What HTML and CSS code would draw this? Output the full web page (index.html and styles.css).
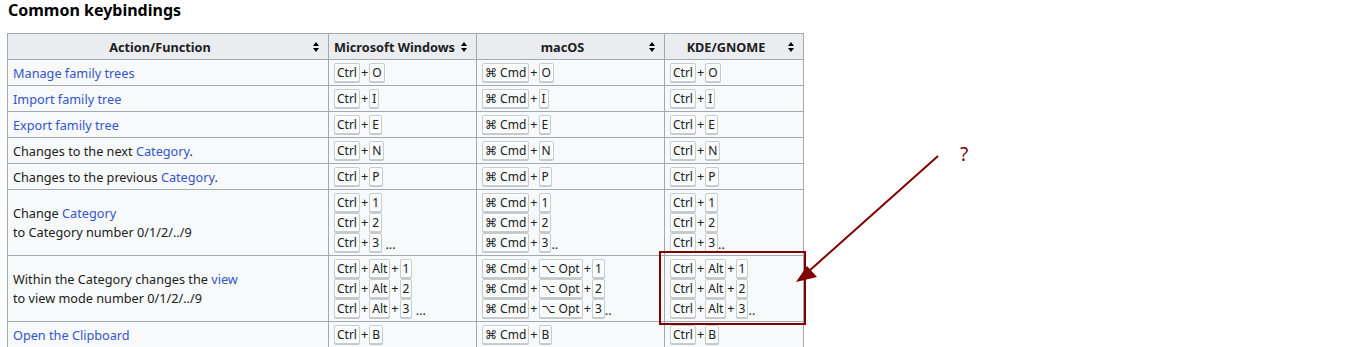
FILE: index.html
```html
<!DOCTYPE html>
<html>
<head>
<meta charset="utf-8">
<link rel="stylesheet" href="styles.css">
</head>
<body>
<div class="page">
  <h3 class="title">Common keybindings</h3>
  <table class="wikitable">
    <colgroup>
      <col class="c1"><col class="c2"><col class="c3"><col class="c4">
    </colgroup>
    <thead>
      <tr>
        <th>Action/Function<span class="sort"></span></th>
        <th>Microsoft Windows<span class="sort"></span></th>
        <th>macOS<span class="sort"></span></th>
        <th>KDE/GNOME<span class="sort"></span></th>
      </tr>
    </thead>
    <tbody>
      <tr>
        <td><a href="#">Manage family trees</a></td>
        <td><div class="kl"><kbd>Ctrl</kbd><span class="p">+</span><kbd>O</kbd></div></td>
        <td><div class="kl"><kbd>⌘ Cmd</kbd><span class="p">+</span><kbd>O</kbd></div></td>
        <td><div class="kl"><kbd>Ctrl</kbd><span class="p">+</span><kbd>O</kbd></div></td>
      </tr>
      <tr>
        <td><a href="#">Import family tree</a></td>
        <td><div class="kl"><kbd>Ctrl</kbd><span class="p">+</span><kbd>I</kbd></div></td>
        <td><div class="kl"><kbd>⌘ Cmd</kbd><span class="p">+</span><kbd>I</kbd></div></td>
        <td><div class="kl"><kbd>Ctrl</kbd><span class="p">+</span><kbd>I</kbd></div></td>
      </tr>
      <tr>
        <td><a href="#">Export family tree</a></td>
        <td><div class="kl"><kbd>Ctrl</kbd><span class="p">+</span><kbd>E</kbd></div></td>
        <td><div class="kl"><kbd>⌘ Cmd</kbd><span class="p">+</span><kbd>E</kbd></div></td>
        <td><div class="kl"><kbd>Ctrl</kbd><span class="p">+</span><kbd>E</kbd></div></td>
      </tr>
      <tr>
        <td>Changes to the next <a href="#">Category</a>.</td>
        <td><div class="kl"><kbd>Ctrl</kbd><span class="p">+</span><kbd>N</kbd></div></td>
        <td><div class="kl"><kbd>⌘ Cmd</kbd><span class="p">+</span><kbd>N</kbd></div></td>
        <td><div class="kl"><kbd>Ctrl</kbd><span class="p">+</span><kbd>N</kbd></div></td>
      </tr>
      <tr>
        <td>Changes to the previous <a href="#">Category</a>.</td>
        <td><div class="kl"><kbd>Ctrl</kbd><span class="p">+</span><kbd>P</kbd></div></td>
        <td><div class="kl"><kbd>⌘ Cmd</kbd><span class="p">+</span><kbd>P</kbd></div></td>
        <td><div class="kl"><kbd>Ctrl</kbd><span class="p">+</span><kbd>P</kbd></div></td>
      </tr>
      <tr>
        <td>Change <a href="#">Category</a><br>to Category number 0/1/2/../9</td>
        <td>
          <div class="kl"><kbd>Ctrl</kbd><span class="p">+</span><kbd>1</kbd></div>
          <div class="kl"><kbd>Ctrl</kbd><span class="p">+</span><kbd>2</kbd></div>
          <div class="kl"><kbd>Ctrl</kbd><span class="p">+</span><kbd>3</kbd><span class="dots">&nbsp;...</span></div>
        </td>
        <td>
          <div class="kl"><kbd>⌘ Cmd</kbd><span class="p">+</span><kbd>1</kbd></div>
          <div class="kl"><kbd>⌘ Cmd</kbd><span class="p">+</span><kbd>2</kbd></div>
          <div class="kl"><kbd>⌘ Cmd</kbd><span class="p">+</span><kbd>3</kbd><span class="dots">..</span></div>
        </td>
        <td>
          <div class="kl"><kbd>Ctrl</kbd><span class="p">+</span><kbd>1</kbd></div>
          <div class="kl"><kbd>Ctrl</kbd><span class="p">+</span><kbd>2</kbd></div>
          <div class="kl"><kbd>Ctrl</kbd><span class="p">+</span><kbd>3</kbd><span class="dots">..</span></div>
        </td>
      </tr>
      <tr>
        <td>Within the Category changes the <a href="#">view</a><br>to view mode number 0/1/2/../9</td>
        <td>
          <div class="kl"><kbd>Ctrl</kbd><span class="p">+</span><kbd>Alt</kbd><span class="p">+</span><kbd>1</kbd></div>
          <div class="kl"><kbd>Ctrl</kbd><span class="p">+</span><kbd>Alt</kbd><span class="p">+</span><kbd>2</kbd></div>
          <div class="kl"><kbd>Ctrl</kbd><span class="p">+</span><kbd>Alt</kbd><span class="p">+</span><kbd>3</kbd><span class="dots">&nbsp;...</span></div>
        </td>
        <td>
          <div class="kl"><kbd>⌘ Cmd</kbd><span class="p">+</span><kbd>⌥ Opt</kbd><span class="p">+</span><kbd>1</kbd></div>
          <div class="kl"><kbd>⌘ Cmd</kbd><span class="p">+</span><kbd>⌥ Opt</kbd><span class="p">+</span><kbd>2</kbd></div>
          <div class="kl"><kbd>⌘ Cmd</kbd><span class="p">+</span><kbd>⌥ Opt</kbd><span class="p">+</span><kbd>3</kbd><span class="dots">..</span></div>
        </td>
        <td>
          <div class="kl"><kbd>Ctrl</kbd><span class="p">+</span><kbd>Alt</kbd><span class="p">+</span><kbd>1</kbd></div>
          <div class="kl"><kbd>Ctrl</kbd><span class="p">+</span><kbd>Alt</kbd><span class="p">+</span><kbd>2</kbd></div>
          <div class="kl"><kbd>Ctrl</kbd><span class="p">+</span><kbd>Alt</kbd><span class="p">+</span><kbd>3</kbd><span class="dots">..</span></div>
        </td>
      </tr>
      <tr>
        <td><a href="#">Open the Clipboard</a></td>
        <td><div class="kl"><kbd>Ctrl</kbd><span class="p">+</span><kbd>B</kbd></div></td>
        <td><div class="kl"><kbd>⌘ Cmd</kbd><span class="p">+</span><kbd>B</kbd></div></td>
        <td><div class="kl"><kbd>Ctrl</kbd><span class="p">+</span><kbd>B</kbd></div></td>
      </tr>
    </tbody>
  </table>

  <div class="highlight-box"></div>
  <svg class="annotation" width="1364" height="347" viewBox="0 0 1364 347">
    <line x1="938" y1="156" x2="809" y2="271" stroke="#800000" stroke-width="2"/>
    <polygon points="796,282 817,277 807,266" fill="#800000"/>
    <text x="960" y="161" fill="#800000" font-family="'Noto Sans', sans-serif" font-size="19">?</text>
  </svg>
</div>
</body>
</html>
```

FILE: styles.css
```css
html, body {
  margin: 0;
  padding: 0;
  background: #ffffff;
}

.page {
  position: relative;
  width: 1364px;
  height: 347px;
  overflow: hidden;
  padding: 0 0 0 7px;
  box-sizing: border-box;
  font-family: "Noto Sans", "DejaVu Sans", sans-serif;
  font-size: 12.7px;
  color: #202122;
}

.title {
  margin: 0;
  font-size: 16px;
  line-height: 20px;
  font-weight: 700;
  color: #000;
  padding-left: 1px;
}

.wikitable {
  margin-top: 13px;
  border-collapse: collapse;
  table-layout: fixed;
  width: 796px;
  background: #f8f9fa;
  border: 1px solid #a2a9b1;
}

.c1 { width: 321px; }
.c2 { width: 148px; }
.c3 { width: 188px; }
.c4 { width: 139px; }

.wikitable th,
.wikitable td {
  border: 1px solid #a2a9b1;
  padding: 3px 5px 2px 5px;
}

.wikitable th {
  position: relative;
  background: #eaecf0;
  font-weight: 700;
  text-align: center;
  line-height: 20px;
  padding-right: 21px;
  white-space: nowrap;
  color: #202122;
}

.sort {
  position: absolute;
  right: 8px;
  top: 50%;
  width: 7px;
  height: 10px;
  margin-top: -5px;
}

.sort::before,
.sort::after {
  content: "";
  position: absolute;
  left: 0;
  border-left: 3.5px solid transparent;
  border-right: 3.5px solid transparent;
}

.sort::before {
  top: 0;
  border-bottom: 4px solid #000;
}

.sort::after {
  bottom: 0;
  border-top: 4px solid #000;
}

.wikitable td {
  line-height: 19px;
  vertical-align: middle;
}

.wikitable a {
  color: #3355cc;
  text-decoration: none;
}

.kl {
  height: 20px;
  line-height: 20px;
  white-space: nowrap;
}

kbd {
  display: inline-block;
  vertical-align: top;
  height: 19px;
  box-sizing: border-box;
  font-family: "Noto Sans", "DejaVu Sans", sans-serif;
  font-size: 12px;
  line-height: 17px;
  padding: 0 2px;
  border: 1px solid #c8ccd1;
  border-radius: 2px;
  background: #f8f9fa;
  box-shadow: 0 1px 0 rgba(0, 0, 0, 0.2), inset 0 0 0 2px #fff;
  color: #202122;
}

.p {
  display: inline-block;
  vertical-align: top;
  line-height: 19px;
  padding: 0 1px;
}

.dots {
  vertical-align: top;
  line-height: 22px;
}

.highlight-box {
  position: absolute;
  left: 659px;
  top: 251px;
  width: 147px;
  height: 74px;
  border: 2px solid #800000;
  box-sizing: border-box;
}

.annotation {
  position: absolute;
  left: 0;
  top: 0;
  pointer-events: none;
}
```
